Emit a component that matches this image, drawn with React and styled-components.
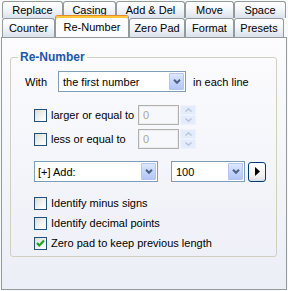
import React from "react";
import styled, { createGlobalStyle } from "styled-components";

const Global = createGlobalStyle`
  html, body { margin: 0; padding: 0; background: #f9f9fa; }
  body { font-family: "Liberation Sans", Arial, sans-serif; font-size: 11px; color: #000; }
`;

const Window = styled.div`
  width: 288px;
  height: 291px;
  box-sizing: border-box;
  padding-top: 1px;
  display: flex;
  flex-direction: column;
  overflow: hidden;
`;

const TabStrip = styled.div`
  display: flex;
  flex-direction: column;
  padding-left: 2px;
`;

const TabRow = styled.div`
  display: flex;
  height: ${(p) => p.h}px;
  position: relative;
  z-index: ${(p) => p.z};
`;

const Tab = styled.div`
  flex: none;
  box-sizing: border-box;
  width: ${(p) => p.w}px;
  height: ${(p) => (p.active ? p.h + 4 : p.h)}px;
  margin-top: ${(p) => (p.active ? -3 : 0)}px;
  border: 1px solid #919b9c;
  border-bottom: none;
  border-radius: 3px 3px 0 0;
  background: ${(p) =>
    p.active
      ? "#fcfcfe"
      : "linear-gradient(#ffffff, #f5f6fa 45%, #dbe1ec)"};
  box-shadow: ${(p) => (p.active ? "inset 0 2px 0 #ffc83c" : "none")};
  border-top-color: ${(p) => (p.active ? "#e68b2c" : "#919b9c")};
  display: flex;
  align-items: center;
  justify-content: center;
  padding-bottom: ${(p) => (p.active ? 1 : 0)}px;
  position: relative;
  z-index: ${(p) => (p.active ? 3 : 1)};
  white-space: nowrap;
`;

const Panel = styled.div`
  margin-left: 1px;
  width: 286px;
  height: 253px;
  box-sizing: border-box;
  border: 1px solid #919b9c;
  background: linear-gradient(#fcfcfe, #f3f4fa 60%, #eceef7);
  padding: 12px 0 0 8px;
  position: relative;
  z-index: 2;
`;

const Group = styled.fieldset`
  margin: 0;
  padding: 0 0 3px 0;
  width: 267px;
  box-sizing: border-box;
  border: 1px solid #d0d0bf;
  border-radius: 3px;
  min-inline-size: 0;
`;

const Legend = styled.legend`
  margin-left: 7px;
  padding: 0 2px;
  font-size: 12px;
  line-height: 14px;
  font-weight: bold;
  color: #2156a8;
`;

const GroupBody = styled.div`
  display: flex;
  flex-direction: column;
  padding-left: 14px;
`;

const Row = styled.div`
  display: flex;
  align-items: center;
  margin-top: ${(p) => p.mt || 0}px;
  padding-left: ${(p) => p.indent || 0}px;
`;

const FieldLabel = styled.span`
  flex: none;
  width: ${(p) => p.w}px;
  margin-left: ${(p) => p.ml || 0}px;
  white-space: nowrap;
`;

const Combo = styled.div`
  flex: none;
  width: ${(p) => p.w}px;
  height: 21px;
  margin-left: ${(p) => p.ml || 0}px;
  box-sizing: border-box;
  border: 1px solid #7f9db9;
  background: #fff;
  display: flex;
  align-items: stretch;
`;

const ComboText = styled.span`
  flex: 1;
  display: flex;
  align-items: center;
  padding-left: ${(p) => p.pl || 4}px;
  white-space: nowrap;
  overflow: hidden;
`;

const ComboButton = styled.span`
  flex: none;
  width: 15px;
  margin: 1px;
  box-sizing: border-box;
  border: 1px solid #b3c6ef;
  border-radius: 1px;
  background: linear-gradient(#dde7fe, #c5d5fb 50%, #b3c7f4);
  display: flex;
  align-items: center;
  justify-content: center;
`;

const Check = styled.span`
  flex: none;
  width: 13px;
  height: 13px;
  box-sizing: border-box;
  border: 1px solid #1c5180;
  background: linear-gradient(135deg, #dcdcd7, #f4f4f1 60%, #ffffff);
  display: flex;
  align-items: center;
  justify-content: center;
`;

const CheckRow = styled.div`
  display: flex;
  align-items: center;
  height: 20px;
  padding-left: 9px;
`;

const CheckList = styled.div`
  display: flex;
  flex-direction: column;
  margin-top: ${(p) => p.mt}px;
`;

const SpinInput = styled.div`
  flex: none;
  width: 41px;
  height: 20px;
  box-sizing: border-box;
  border: 1px solid #b0b0b0;
  box-shadow: inset 0 0 0 1px #ececec;
  background: #f7f8fb;
  color: #aca899;
  display: flex;
  align-items: center;
  padding-left: 4px;
`;

const SpinButtons = styled.div`
  flex: none;
  width: 16px;
  height: 20px;
  margin-left: 1px;
  display: flex;
  flex-direction: column;
  gap: 0;
`;

const SpinHalf = styled.span`
  flex: 1;
  background: #e3ebfc;
  border: 1px solid #edf2fd;
  display: flex;
  align-items: center;
  justify-content: center;
`;

const PlayButton = styled.div`
  flex: none;
  width: 18px;
  height: 20px;
  margin-left: 3px;
  box-sizing: border-box;
  border: 1px solid #003c74;
  border-radius: 3px;
  background: linear-gradient(#ffffff, #f2f2f4 70%, #dcdde6);
  display: flex;
  align-items: center;
  justify-content: center;
`;

const Chevron = () => (
  <svg width="8" height="5" viewBox="0 0 8 5">
    <polyline points="1,0.8 4,3.8 7,0.8" fill="none" stroke="#4d6185" strokeWidth="2" />
  </svg>
);

const SpinArrow = ({ up }) => (
  <svg width="7" height="4" viewBox="0 0 7 4">
    <polyline
      points={up ? "0.5,3.5 3.5,0.8 6.5,3.5" : "0.5,0.5 3.5,3.2 6.5,0.5"}
      fill="none"
      stroke="#b9c6dc"
      strokeWidth="1.5"
    />
  </svg>
);

const CheckMark = () => (
  <svg width="11" height="11" viewBox="0 0 11 11">
    <polyline points="2,5 4.3,7.5 9,2.6" fill="none" stroke="#21a121" strokeWidth="2.2" />
  </svg>
);

const rows = [
  [
    { label: "Replace", w: 61 },
    { label: "Casing", w: 53 },
    { label: "Add & Del", w: 69 },
    { label: "Move", w: 49 },
    { label: "Space", w: 52 },
  ],
  [
    { label: "Counter", w: 53 },
    { label: "Re-Number", w: 74, active: true },
    { label: "Zero Pad", w: 56 },
    { label: "Format", w: 49 },
    { label: "Presets", w: 50 },
  ],
];

const CheckItem = ({ checked, children }) => (
  <CheckRow>
    <Check>{checked && <CheckMark />}</Check>
    <FieldLabel ml={4}>{children}</FieldLabel>
  </CheckRow>
);

const SpinRow = ({ label, mt }) => (
  <Row mt={mt} indent={9}>
    <Check />
    <FieldLabel ml={4} w={87}>{label}</FieldLabel>
    <SpinInput>0</SpinInput>
    <SpinButtons>
      <SpinHalf><SpinArrow up /></SpinHalf>
      <SpinHalf><SpinArrow /></SpinHalf>
    </SpinButtons>
  </Row>
);

export default function App() {
  return (
    <Window>
      <Global />
      <TabStrip>
        {rows.map((r, i) => (
          <TabRow key={i} h={i === 0 ? 17 : 19} z={i === 0 ? 1 : 2}>
            {r.map((t) => (
              <Tab key={t.label} w={t.w} h={i === 0 ? 17 : 19} active={t.active}>
                {t.label}
              </Tab>
            ))}
          </TabRow>
        ))}
      </TabStrip>
      <Panel>
        <Group>
          <Legend>Re-Number</Legend>
          <GroupBody>
            <Row mt={7}>
              <FieldLabel w={33}>With</FieldLabel>
              <Combo w={128}>
                <ComboText>the first number</ComboText>
                <ComboButton><Chevron /></ComboButton>
              </Combo>
              <FieldLabel ml={7}>in each line</FieldLabel>
            </Row>
            <SpinRow label="larger or equal to" mt={13} />
            <SpinRow label="less or equal to" mt={4} />
            <Row mt={12} indent={9}>
              <Combo w={124}>
                <ComboText pl={3}>[+] Add:</ComboText>
                <ComboButton><Chevron /></ComboButton>
              </Combo>
              <Combo w={74} ml={13}>
                <ComboText>100</ComboText>
                <ComboButton><Chevron /></ComboButton>
              </Combo>
              <PlayButton>
                <svg width="5" height="9" viewBox="0 0 5 9">
                  <polygon points="0,0 5,4.5 0,9" fill="#000" />
                </svg>
              </PlayButton>
            </Row>
            <CheckList mt={11}>
              <CheckItem>Identify minus signs</CheckItem>
              <CheckItem>Identify decimal points</CheckItem>
              <CheckItem checked>Zero pad to keep previous length</CheckItem>
            </CheckList>
          </GroupBody>
        </Group>
      </Panel>
    </Window>
  );
}
